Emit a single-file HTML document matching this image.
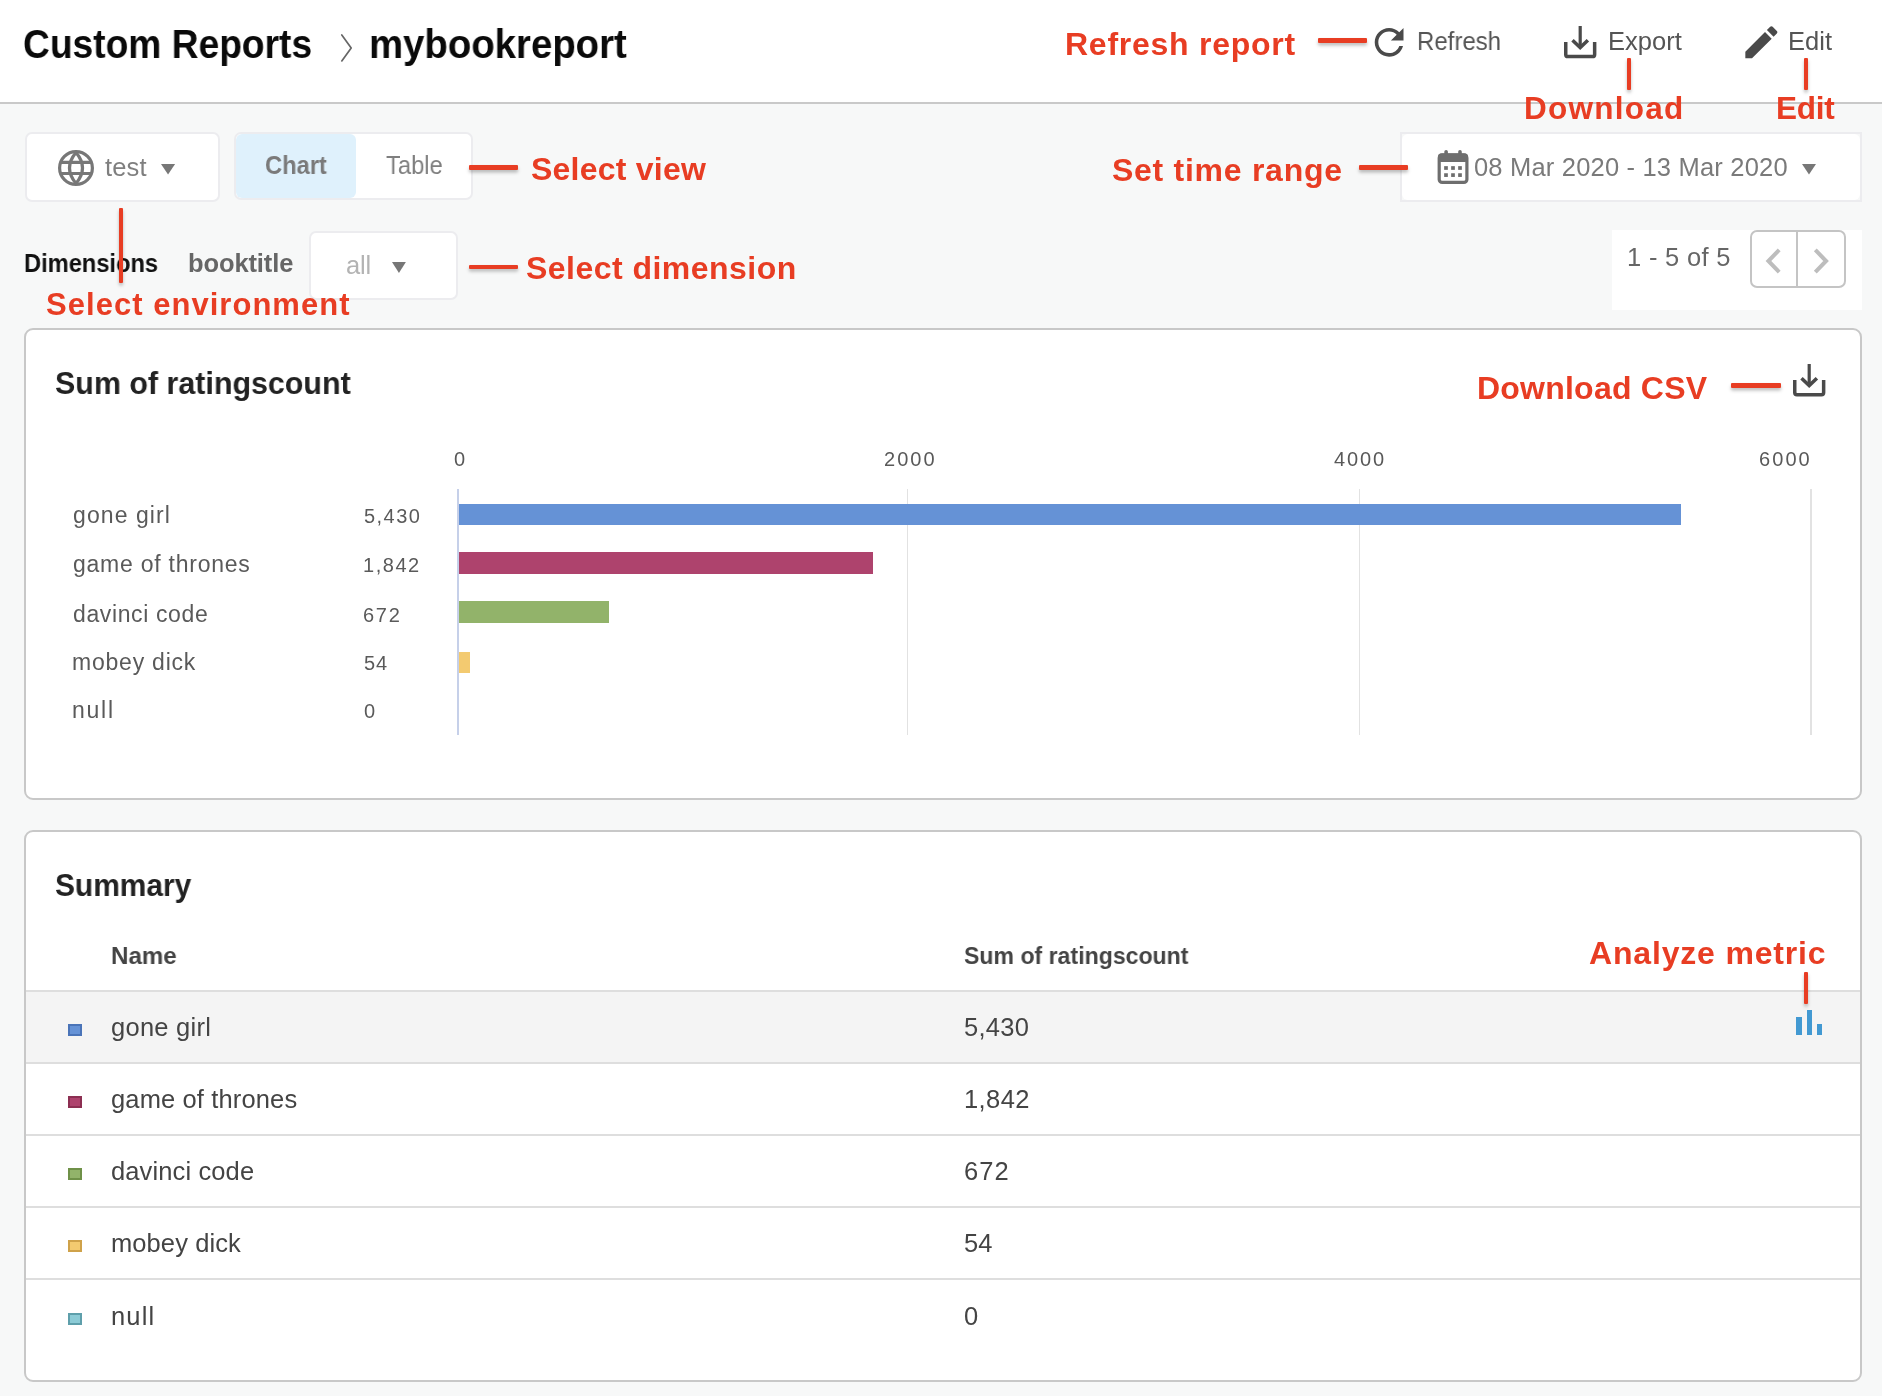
<!DOCTYPE html>
<html><head><meta charset="utf-8"><title>Custom Reports</title>
<style>
html,body{margin:0;padding:0;width:1882px;height:1396px;overflow:hidden;background:#f7f8f8;font-family:"Liberation Sans",sans-serif}
.t{position:absolute;white-space:nowrap;will-change:transform}
.b{position:absolute}
.i{position:absolute;overflow:visible}
</style></head><body>
<div class="b" style="left:0px;top:0px;width:1882px;height:102px;background:#fff"></div>
<div class="b" style="left:0px;top:102px;width:1882px;height:2px;background:#c9c9c9"></div>
<div class="b" style="left:25px;top:132.3px;width:195.1px;height:69.39999999999998px;background:#fff;border:2px solid #ececef;border-radius:7px;box-sizing:border-box"></div>
<div class="b" style="left:234px;top:132px;width:239px;height:68px;background:#fff;border:2px solid #ececef;border-radius:7px;box-sizing:border-box"></div>
<div class="b" style="left:236px;top:134px;width:120px;height:64px;background:#dff1fc;border-radius:6px"></div>
<div class="b" style="left:1400px;top:132px;width:462px;height:69.69999999999999px;border:2px solid #ececef;box-sizing:border-box"></div>
<div class="b" style="left:1402px;top:134px;width:458px;height:65.69999999999999px;background:#fff;border-radius:6px"></div>
<div class="b" style="left:309px;top:230.5px;width:148.5px;height:69.0px;background:#fff;border:2px solid #ececef;border-radius:7px;box-sizing:border-box"></div>
<div class="b" style="left:1612px;top:230px;width:250px;height:80px;background:#fff"></div>
<div class="b" style="left:1750px;top:230px;width:96px;height:58px;border:2px solid #c4c4c4;border-radius:7px;box-sizing:border-box"></div>
<div class="b" style="left:1796.3px;top:231px;width:2.0px;height:56px;background:#c4c4c4"></div>
<div class="b" style="left:24px;top:328px;width:1838px;height:472px;background:#fff;border:2px solid #c8c8c8;border-radius:9px;box-sizing:border-box"></div>
<div class="b" style="left:24px;top:830px;width:1838px;height:552px;background:#fff;border:2px solid #c8c8c8;border-radius:9px;box-sizing:border-box"></div>
<div class="b" style="left:457.2px;top:489px;width:1.6999999999999886px;height:246px;background:#c6d0e9"></div>
<div class="b" style="left:906.8000000000001px;top:489px;width:1.599999999999909px;height:246px;background:#e2e2e2"></div>
<div class="b" style="left:1358.6000000000001px;top:489px;width:1.599999999999909px;height:246px;background:#e2e2e2"></div>
<div class="b" style="left:1810.1000000000001px;top:489px;width:1.599999999999909px;height:246px;background:#e2e2e2"></div>
<div class="b" style="left:458.8px;top:503.6px;width:1222.0px;height:21.899999999999977px;background:#6592d6"></div>
<div class="b" style="left:458.8px;top:552.1px;width:414.09999999999997px;height:22.100000000000023px;background:#ae436d"></div>
<div class="b" style="left:458.8px;top:601.1px;width:150.7px;height:22.0px;background:#92b36a"></div>
<div class="b" style="left:458.8px;top:651.6px;width:11.599999999999966px;height:21.799999999999955px;background:#f3ca70"></div>
<div class="b" style="left:26px;top:991.5px;width:1834px;height:71.5px;background:#f4f4f4"></div>
<div class="b" style="left:26px;top:989.8px;width:1834px;height:2.0px;background:#dedede"></div>
<div class="b" style="left:26px;top:1062px;width:1834px;height:2px;background:#dedede"></div>
<div class="b" style="left:26px;top:1134px;width:1834px;height:2px;background:#dedede"></div>
<div class="b" style="left:26px;top:1206px;width:1834px;height:2px;background:#dedede"></div>
<div class="b" style="left:26px;top:1278px;width:1834px;height:2px;background:#dedede"></div>
<div class="b" style="left:68px;top:1023.5px;width:14px;height:12.5px;background:#6592d6;border:2px solid #4a74b8;box-sizing:border-box"></div>
<div class="b" style="left:68px;top:1095.5px;width:14px;height:12.5px;background:#ae436d;border:2px solid #8c2f52;box-sizing:border-box"></div>
<div class="b" style="left:68px;top:1167.5px;width:14px;height:12.5px;background:#92b36a;border:2px solid #6f9148;box-sizing:border-box"></div>
<div class="b" style="left:68px;top:1239.5px;width:14px;height:12.5px;background:#f3ca70;border:2px solid #cfa24a;box-sizing:border-box"></div>
<div class="b" style="left:68px;top:1312.5px;width:14px;height:12.5px;background:#8ccbd6;border:2px solid #5e9fab;box-sizing:border-box"></div>
<svg class="i" style="left:1367px;top:20px" width="44" height="44" viewBox="-0.2778 -0.3889 24.4444 24.4444"><path fill="#4a4a4a" d="M17.65 6.35C16.2 4.9 14.21 4 12 4c-4.42 0-7.99 3.58-7.99 8s3.57 8 7.99 8c3.73 0 6.84-2.55 7.73-6h-2.08c-.82 2.33-3.04 4-5.65 4-3.31 0-6-2.69-6-6s2.69-6 6-6c1.66 0 3.14.69 4.22 1.78L13 11h7V4l-2.35 2.35z"/></svg>
<svg class="i" style="left:1564.2px;top:26.1px" width="32.4" height="32.4" viewBox="0 0 32.4 32.4"><path d="M1.75 16.1V28.4a2.2 2.2 0 0 0 2.2 2.2H28.45a2.2 2.2 0 0 0 2.2-2.2V16.1" fill="none" stroke="#4a4a4a" stroke-width="3.5"/><path d="M16.2 0V20.5" stroke="#4a4a4a" stroke-width="3.2" fill="none"/><path d="M8.5 14.2L16.2 21.6L23.9 14.2" stroke="#4a4a4a" stroke-width="3.5" fill="none" stroke-linejoin="miter"/></svg>
<svg class="i" style="left:1793px;top:364.2px" width="32.4" height="32.6" viewBox="0 0 32.4 32.6"><path d="M1.75 16.1V28.6a2.2 2.2 0 0 0 2.2 2.2H28.45a2.2 2.2 0 0 0 2.2-2.2V16.1" fill="none" stroke="#4a4a4a" stroke-width="3.5"/><path d="M16.2 0V20.5" stroke="#4a4a4a" stroke-width="3.2" fill="none"/><path d="M8.5 14.2L16.2 21.6L23.9 14.2" stroke="#4a4a4a" stroke-width="3.5" fill="none" stroke-linejoin="miter"/></svg>
<svg class="i" style="left:1739.7px;top:20.8px" width="42.7" height="42.7" viewBox="0 0 24 24"><path fill="#4a4a4a" d="M3 17.25V21h3.75L17.81 9.94l-3.75-3.75L3 17.25zM20.71 7.04c.39-.39.39-1.02 0-1.41l-2.34-2.34c-.39-.39-1.02-.39-1.41 0l-1.83 1.83 3.75 3.75 1.83-1.83z"/></svg>
<svg class="i" style="left:56px;top:148px" width="40" height="40" viewBox="0 0 40 40"><g fill="none" stroke="#777777" stroke-width="3.2"><circle cx="20" cy="20" r="16.4"/><path d="M20 4.5Q7 20 20 35.5M20 4.5Q33 20 20 35.5"/><path d="M5 14.3H35M5 25.5H35"/></g></svg>
<svg class="i" style="left:1437px;top:149px" width="32" height="36" viewBox="0 0 32 36"><rect x="2.2" y="5.9" width="27.7" height="27.5" rx="3" fill="none" stroke="#6e6e6e" stroke-width="3.2"/><rect x="1" y="4.5" width="30" height="8.4" rx="3" fill="#6e6e6e"/><rect x="7.3" y="1" width="3.6" height="6" rx="1.8" fill="#6e6e6e"/><rect x="21.2" y="1" width="3.6" height="6" rx="1.8" fill="#6e6e6e"/><rect x="7.15" y="17.15" width="3.7" height="3.7" fill="#6e6e6e"/><rect x="7.15" y="24.25" width="3.7" height="3.7" fill="#6e6e6e"/><rect x="14.15" y="17.15" width="3.7" height="3.7" fill="#6e6e6e"/><rect x="14.15" y="24.25" width="3.7" height="3.7" fill="#6e6e6e"/><rect x="21.15" y="17.15" width="3.7" height="3.7" fill="#6e6e6e"/><rect x="21.15" y="24.25" width="3.7" height="3.7" fill="#6e6e6e"/></svg>
<svg class="i" style="left:160.9px;top:164.2px" width="14.099999999999994" height="10.400000000000006" viewBox="0 0 14.099999999999994 10.400000000000006"><path d="M0 0H14.099999999999994L7.049999999999997 10.400000000000006Z" fill="#777"/></svg>
<svg class="i" style="left:391.8px;top:261.8px" width="13.899999999999977" height="10.899999999999977" viewBox="0 0 13.899999999999977 10.899999999999977"><path d="M0 0H13.899999999999977L6.949999999999989 10.899999999999977Z" fill="#777"/></svg>
<svg class="i" style="left:1802px;top:164px" width="14" height="10.400000000000006" viewBox="0 0 14 10.400000000000006"><path d="M0 0H14L7.0 10.400000000000006Z" fill="#777"/></svg>
<svg class="i" style="left:1755px;top:240px" width="85" height="42" viewBox="1755 240 85 42"><path d="M1779.2 249.9L1768.4 261L1779.2 272.1M1815.3 249.9L1826.1 261L1815.3 272.1" fill="none" stroke="#bdbdbd" stroke-width="4"/></svg>
<svg class="i" style="left:338px;top:33px" width="18" height="30" viewBox="0 0 18 30"><path d="M3.8 1.9L13.2 14.9L3.8 27.9" fill="none" stroke="#666" stroke-width="1.7" stroke-linecap="round" stroke-linejoin="round"/></svg>
<div class="b" style="left:1796.4px;top:1017.2px;width:5.599999999999909px;height:17.799999999999955px;background:#4299d2"></div>
<div class="b" style="left:1806.7px;top:1010px;width:5.2999999999999545px;height:25px;background:#4299d2"></div>
<div class="b" style="left:1817px;top:1024px;width:5px;height:11px;background:#4299d2"></div>
<div class="t" style="left:23.07px;top:23.80px;font-size:40px;line-height:40px;font-weight:700;color:#0a0a0a;transform:scaleX(0.9291);transform-origin:0 0">Custom Reports</div>
<div class="t" style="left:369.08px;top:23.80px;font-size:40px;line-height:40px;font-weight:700;color:#0a0a0a;transform:scaleX(0.9587);transform-origin:0 0">mybookreport</div>
<div class="t" style="left:1065.30px;top:28.40px;font-size:32px;line-height:32px;font-weight:700;color:#e83d23;letter-spacing:0.743px">Refresh report</div>
<div class="t" style="left:1416.52px;top:28.80px;font-size:25.5px;line-height:25.5px;font-weight:400;color:#555555;transform:scaleX(0.9419);transform-origin:0 0">Refresh</div>
<div class="t" style="left:1607.70px;top:28.80px;font-size:25.5px;line-height:25.5px;font-weight:400;color:#555555;letter-spacing:0.037px">Export</div>
<div class="t" style="left:1788.00px;top:28.80px;font-size:25.5px;line-height:25.5px;font-weight:400;color:#555555;letter-spacing:0.048px">Edit</div>
<div class="t" style="left:1524.00px;top:93.00px;font-size:31.5px;line-height:31.5px;font-weight:700;color:#e83d23;letter-spacing:1.251px">Download</div>
<div class="t" style="left:1776.40px;top:93.00px;font-size:31.5px;line-height:31.5px;font-weight:700;color:#e83d23;letter-spacing:-0.268px">Edit</div>
<div class="t" style="left:105.00px;top:155.00px;font-size:25.5px;line-height:25.5px;font-weight:400;color:#7f7f7f;letter-spacing:0.128px">test</div>
<div class="t" style="left:265.27px;top:153.20px;font-size:25.5px;line-height:25.5px;font-weight:700;color:#7a7a7a;transform:scaleX(0.9289);transform-origin:0 0">Chart</div>
<div class="t" style="left:385.80px;top:153.20px;font-size:25.5px;line-height:25.5px;font-weight:400;color:#7f7f7f;transform:scaleX(0.9312);transform-origin:0 0">Table</div>
<div class="t" style="left:530.70px;top:153.00px;font-size:32px;line-height:32px;font-weight:700;color:#e83d23;letter-spacing:0.224px">Select view</div>
<div class="t" style="left:1111.50px;top:153.60px;font-size:32px;line-height:32px;font-weight:700;color:#e83d23;letter-spacing:0.729px">Set time range</div>
<div class="t" style="left:1473.60px;top:154.70px;font-size:25.5px;line-height:25.5px;font-weight:400;color:#7a7a7a;letter-spacing:0.190px">08 Mar 2020 - 13 Mar 2020</div>
<div class="t" style="left:23.97px;top:251.00px;font-size:25.5px;line-height:25.5px;font-weight:700;color:#111111;transform:scaleX(0.9278);transform-origin:0 0">Dimensions</div>
<div class="t" style="left:187.50px;top:251.00px;font-size:25.5px;line-height:25.5px;font-weight:700;color:#666666;letter-spacing:-0.108px">booktitle</div>
<div class="t" style="left:345.70px;top:252.80px;font-size:25.5px;line-height:25.5px;font-weight:400;color:#b3b3b3;letter-spacing:-0.174px">all</div>
<div class="t" style="left:525.60px;top:251.60px;font-size:32px;line-height:32px;font-weight:700;color:#e83d23;letter-spacing:0.471px">Select dimension</div>
<div class="t" style="left:46.00px;top:288.70px;font-size:31px;line-height:31px;font-weight:700;color:#e83d23;letter-spacing:1.032px">Select environment</div>
<div class="t" style="left:1626.50px;top:245.20px;font-size:25.5px;line-height:25.5px;font-weight:400;color:#666666;letter-spacing:0.315px">1 - 5 of 5</div>
<div class="t" style="left:54.50px;top:366.60px;font-size:32px;line-height:32px;font-weight:700;color:#222222;transform:scaleX(0.9504);transform-origin:0 0">Sum of ratingscount</div>
<div class="t" style="left:1477.20px;top:372.00px;font-size:32px;line-height:32px;font-weight:700;color:#e83d23;letter-spacing:0.226px">Download CSV</div>
<div class="t" style="left:453.60px;top:448.80px;font-size:20px;line-height:20px;font-weight:400;color:#595959;letter-spacing:0.000px">0</div>
<div class="t" style="left:883.70px;top:448.80px;font-size:20px;line-height:20px;font-weight:400;color:#595959;letter-spacing:2.010px">2000</div>
<div class="t" style="left:1334.40px;top:448.80px;font-size:20px;line-height:20px;font-weight:400;color:#595959;letter-spacing:1.877px">4000</div>
<div class="t" style="left:1758.60px;top:448.90px;font-size:20px;line-height:20px;font-weight:400;color:#595959;letter-spacing:2.077px">6000</div>
<div class="t" style="left:72.90px;top:503.50px;font-size:23px;line-height:23px;font-weight:400;color:#5a5a5a;letter-spacing:1.085px">gone girl</div>
<div class="t" style="left:72.90px;top:553.10px;font-size:23px;line-height:23px;font-weight:400;color:#5a5a5a;letter-spacing:0.756px">game of thrones</div>
<div class="t" style="left:72.90px;top:602.70px;font-size:23px;line-height:23px;font-weight:400;color:#5a5a5a;letter-spacing:0.621px">davinci code</div>
<div class="t" style="left:71.90px;top:650.60px;font-size:23px;line-height:23px;font-weight:400;color:#5a5a5a;letter-spacing:0.775px">mobey dick</div>
<div class="t" style="left:71.90px;top:699.00px;font-size:23px;line-height:23px;font-weight:400;color:#5a5a5a;letter-spacing:1.736px">null</div>
<div class="t" style="left:363.50px;top:505.50px;font-size:20px;line-height:20px;font-weight:400;color:#5a5a5a;letter-spacing:1.469px">5,430</div>
<div class="t" style="left:362.50px;top:555.10px;font-size:20px;line-height:20px;font-weight:400;color:#5a5a5a;letter-spacing:1.544px">1,842</div>
<div class="t" style="left:362.50px;top:604.70px;font-size:20px;line-height:20px;font-weight:400;color:#5a5a5a;letter-spacing:1.727px">672</div>
<div class="t" style="left:363.50px;top:652.60px;font-size:20px;line-height:20px;font-weight:400;color:#5a5a5a;letter-spacing:0.877px">54</div>
<div class="t" style="left:363.50px;top:701.00px;font-size:20px;line-height:20px;font-weight:400;color:#5a5a5a;letter-spacing:0.000px">0</div>
<div class="t" style="left:55.00px;top:869.00px;font-size:32px;line-height:32px;font-weight:700;color:#222222;transform:scaleX(0.9346);transform-origin:0 0">Summary</div>
<div class="t" style="left:111.41px;top:943.80px;font-size:24.5px;line-height:24.5px;font-weight:700;color:#444444;transform:scaleX(0.9861);transform-origin:0 0">Name</div>
<div class="t" style="left:964.40px;top:944.10px;font-size:24.5px;line-height:24.5px;font-weight:700;color:#444444;transform:scaleX(0.9423);transform-origin:0 0">Sum of ratingscount</div>
<div class="t" style="left:1588.80px;top:936.80px;font-size:32px;line-height:32px;font-weight:700;color:#e83d23;letter-spacing:0.825px">Analyze metric</div>
<div class="t" style="left:110.80px;top:1015.00px;font-size:25.5px;line-height:25.5px;font-weight:400;color:#444444;letter-spacing:0.256px">gone girl</div>
<div class="t" style="left:110.80px;top:1087.00px;font-size:25.5px;line-height:25.5px;font-weight:400;color:#444444;letter-spacing:0.134px">game of thrones</div>
<div class="t" style="left:110.80px;top:1159.00px;font-size:25.5px;line-height:25.5px;font-weight:400;color:#444444;letter-spacing:0.120px">davinci code</div>
<div class="t" style="left:110.80px;top:1231.00px;font-size:25.5px;line-height:25.5px;font-weight:400;color:#444444;letter-spacing:0.087px">mobey dick</div>
<div class="t" style="left:110.80px;top:1304.00px;font-size:25.5px;line-height:25.5px;font-weight:400;color:#444444;letter-spacing:1.157px">null</div>
<div class="t" style="left:964.20px;top:1015.00px;font-size:25.5px;line-height:25.5px;font-weight:400;color:#444444;letter-spacing:0.292px">5,430</div>
<div class="t" style="left:964.20px;top:1087.00px;font-size:25.5px;line-height:25.5px;font-weight:400;color:#444444;letter-spacing:0.417px">1,842</div>
<div class="t" style="left:964.20px;top:1159.00px;font-size:25.5px;line-height:25.5px;font-weight:400;color:#444444;letter-spacing:1.018px">672</div>
<div class="t" style="left:964.20px;top:1231.00px;font-size:25.5px;line-height:25.5px;font-weight:400;color:#444444;letter-spacing:0.118px">54</div>
<div class="t" style="left:964.20px;top:1304.00px;font-size:25.5px;line-height:25.5px;font-weight:400;color:#444444;letter-spacing:0.000px">0</div>
<div class="b" style="left:1317.8px;top:38.35px;width:49.200000000000045px;height:4.400000000000006px;background:#e83d23;box-shadow:0 2.5px 3.5px rgba(0,0,0,.26);border-radius:1px"></div>
<div class="b" style="left:1627.2px;top:57.8px;width:4.0px;height:31.799999999999997px;background:#e83d23;box-shadow:0 2.5px 3.5px rgba(0,0,0,.26);border-radius:1px"></div>
<div class="b" style="left:1803.5px;top:57.8px;width:4.0px;height:31.799999999999997px;background:#e83d23;box-shadow:0 2.5px 3.5px rgba(0,0,0,.26);border-radius:1px"></div>
<div class="b" style="left:468.6px;top:165.45000000000002px;width:49.10000000000002px;height:4.399999999999977px;background:#e83d23;box-shadow:0 2.5px 3.5px rgba(0,0,0,.26);border-radius:1px"></div>
<div class="b" style="left:1358.5px;top:165.45000000000002px;width:49.5px;height:4.399999999999977px;background:#e83d23;box-shadow:0 2.5px 3.5px rgba(0,0,0,.26);border-radius:1px"></div>
<div class="b" style="left:119.4px;top:207.7px;width:4.0px;height:75.30000000000001px;background:#e83d23;box-shadow:0 2.5px 3.5px rgba(0,0,0,.26);border-radius:1px"></div>
<div class="b" style="left:469px;top:264.85px;width:49px;height:4.399999999999977px;background:#e83d23;box-shadow:0 2.5px 3.5px rgba(0,0,0,.26);border-radius:1px"></div>
<div class="b" style="left:1731.2px;top:383.45000000000005px;width:49.700000000000045px;height:4.399999999999977px;background:#e83d23;box-shadow:0 2.5px 3.5px rgba(0,0,0,.26);border-radius:1px"></div>
<div class="b" style="left:1803.5px;top:971.8px;width:4.0px;height:31.90000000000009px;background:#e83d23;box-shadow:0 2.5px 3.5px rgba(0,0,0,.26);border-radius:1px"></div>
</body></html>
